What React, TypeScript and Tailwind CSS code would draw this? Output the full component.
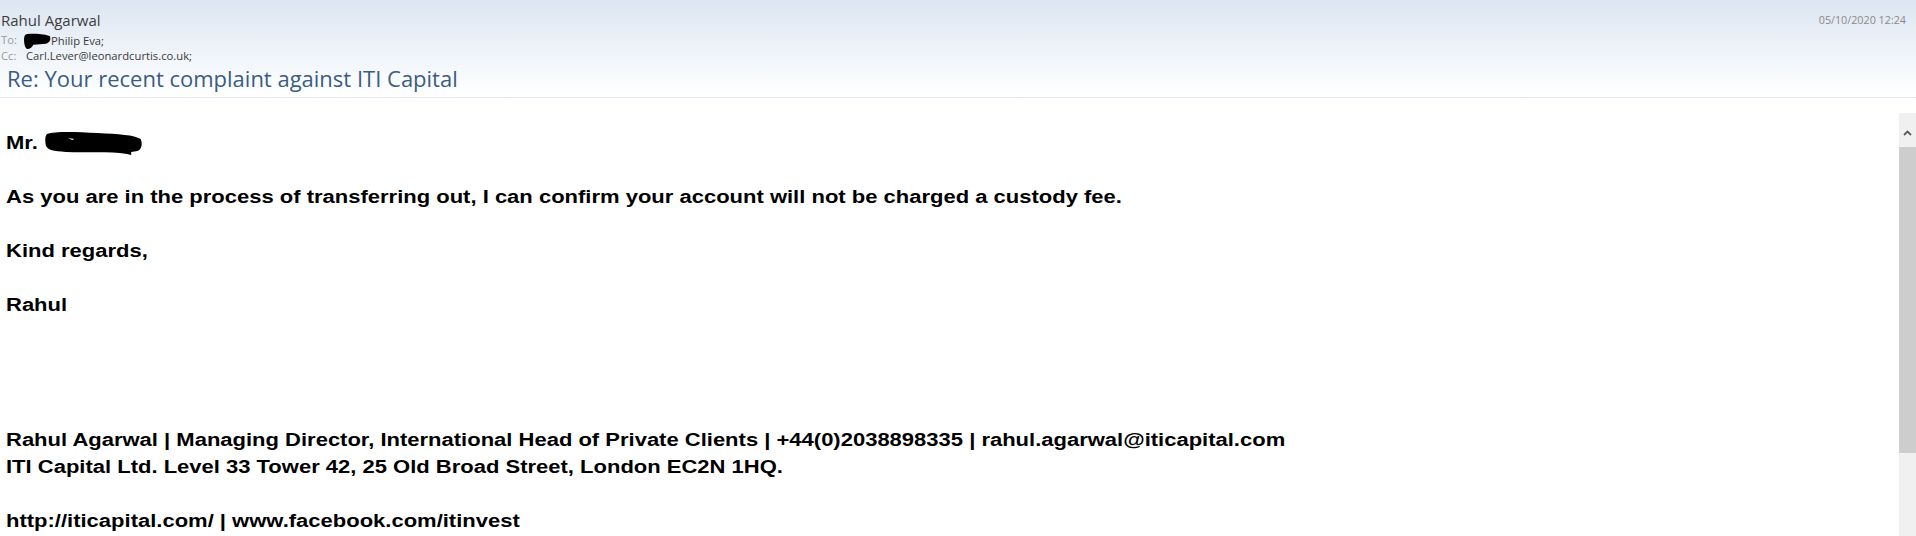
import React from "react";

function BlobTo() {
  return (
    <svg width="28" height="16" viewBox="0 0 27 15" preserveAspectRatio="none" className="inline-block align-[-4px] -ml-[3px]">
      <path d="M4 1 C12 0 22 1 26 3 C27 6 26 9 22 10 L10 11 C9 13 7 15 4 15 C2 14 1 10 1 6 C1 3 2 1 4 1 Z" fill="#000" />
    </svg>
  );
}

function BlobName() {
  return (
    <svg width="83" height="25" viewBox="0 0 93 25" preserveAspectRatio="none" className="inline-block align-[-6px] ml-px">
      <path d="M2 4 C10 1 30 2 50 3 C70 4 85 5 91 9 C93 14 92 19 88 21 L82 22 L82 25 L78 24 C60 21 40 23 20 22 C8 21 3 20 1 16 C0 11 0 6 2 4 Z" fill="#000" />
      <path d="M22 8 L28 9 L26 10 Z" fill="#fff" />
    </svg>
  );
}

const Blank = () => <div className="h-[27px]" />;

export default function App() {
  return (
    <div className="w-full h-[536px] overflow-hidden bg-white">
      <div className="h-[98px] border-b border-[#e3e9f0] bg-linear-to-b from-[#dce5f1] via-[#eef3f9] to-white pl-px pr-[10px] pt-[9px] font-['Open_Sans','Noto_Sans',sans-serif]">
        <div className="flex justify-between items-start">
          <div className="text-[15px] leading-[22px] text-[#3d3d3d]">Rahul Agarwal</div>
          <div className="text-[10.75px] leading-[22px] text-[#8a8a8a]">05/10/2020 12:24</div>
        </div>
        <div className="mt-[2px] flex text-[11.25px] leading-[14px] text-[#3a3a3a]">
          <span className="w-[25px] text-[#9a9a9a]">To:</span>
          <span>
            <BlobTo />
            Philip Eva;
          </span>
        </div>
        <div className="flex text-[11.25px] leading-[14px] text-[#3a3a3a]">
          <span className="w-[25px] text-[#9a9a9a]">Cc:</span>
          <span>Carl.Lever@leonardcurtis.co.uk;</span>
        </div>
        <div className="mt-[1px] pl-[6px] text-[22px] leading-[28px] text-[#3b5c84]">
          Re: Your recent complaint against ITI Capital
        </div>
      </div>
      <div className="flex items-start">
        <div className="flex-1 pt-[31px] pl-[6px] font-['Liberation_Sans',Arial,sans-serif] font-bold text-[18.67px] leading-[27px] text-black">
          <div className="origin-left scale-x-[1.179]">
            <div>
              Mr. <BlobName />
            </div>
            <Blank />
            <div>As you are in the process of transferring out, I can confirm your account will not be charged a custody fee.</div>
            <Blank />
            <div>Kind regards,</div>
            <Blank />
            <div>Rahul</div>
            <Blank />
            <Blank />
            <Blank />
            <Blank />
            <div>Rahul Agarwal | Managing Director, International Head of Private Clients | +44(0)2038898335 | rahul.agarwal@iticapital.com</div>
            <div>ITI Capital Ltd. Level 33 Tower 42, 25 Old Broad Street, London EC2N 1HQ.</div>
            <Blank />
            <div>http://iticapital.com/ | www.facebook.com/itinvest</div>
          </div>
        </div>
        <div className="mt-[15px] w-[17px] h-[423px] flex flex-col bg-[#f0f0f0]">
          <div className="h-[34px] flex justify-center pt-[17px]">
            <svg width="9" height="6" viewBox="0 0 9 6">
              <path d="M1 5 L4.5 1.5 L8 5" fill="none" stroke="#5a5a5a" strokeWidth="1.8" />
            </svg>
          </div>
          <div className="h-[306px] bg-[#cdcdcd]" />
          <div className="flex-1" />
        </div>
      </div>
    </div>
  );
}
